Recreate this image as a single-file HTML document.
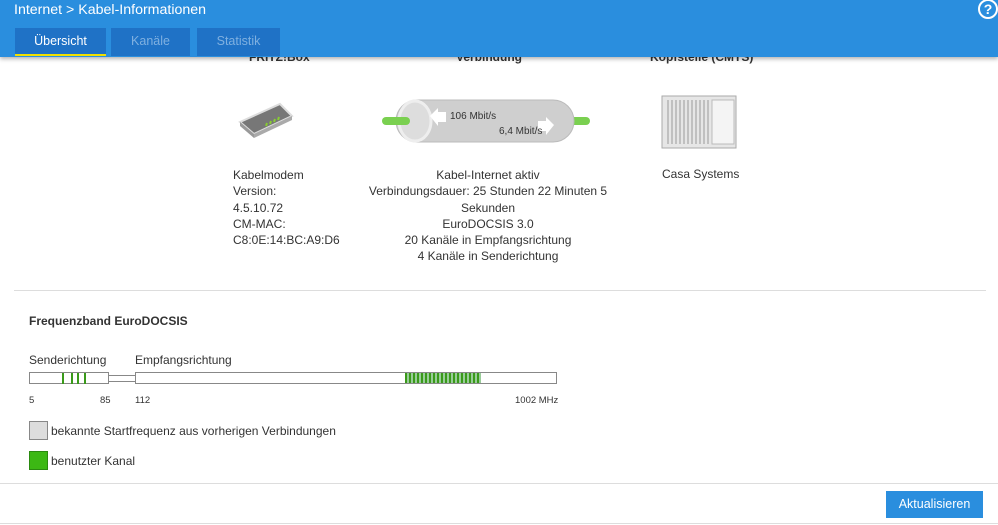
<!DOCTYPE html>
<html><head><meta charset="utf-8"><style>
body{margin:0;width:998px;height:525px;overflow:hidden;background:#fff;font-family:"Liberation Sans",sans-serif;color:#333;position:relative}
.a{position:absolute}
.hdr{left:0;top:0;width:998px;height:57px;background:#2a8ede;box-shadow:0 2px 4px rgba(0,0,0,.3);z-index:2}
.tab{top:28px;height:28px;background:#1f72c6;color:#7fb0e0;font-size:12.5px;text-align:center;line-height:27px}
.c{text-align:center;font-size:12px;line-height:16.3px}
.tk{position:absolute;top:1px;width:2px;height:11px;background:#3a9a1a}
</style></head><body>
<div class="a hdr">
 <div class="a" style="left:14px;top:2px;color:#fff;font-size:14.2px">Internet &gt; Kabel-Informationen</div>
 <div class="a" style="left:978px;top:-1px;width:16px;height:16px;border:2px solid #fff;border-radius:50%;color:#fff;font-weight:bold;font-size:14px;text-align:center;line-height:16px">?</div>
 <div class="a tab" style="left:15px;width:91px;color:#fff;border-bottom:2px solid #f0e000;height:26px">Übersicht</div>
 <div class="a tab" style="left:111px;width:79px">Kanäle</div>
 <div class="a tab" style="left:197px;width:83px">Statistik</div>
</div>
<div class="a" style="left:249px;top:50px;font-size:12px;font-weight:bold">FRITZ!Box</div>
<div class="a" style="left:456px;top:50px;font-size:12px;font-weight:bold">Verbindung</div>
<div class="a" style="left:650px;top:50px;font-size:12px;font-weight:bold">Kopfstelle (CMTS)</div>
<svg class="a" style="left:236px;top:100px" width="60" height="40"><polygon points="4,22 44,4 56,16 18,34" fill="#777" stroke="#ddd" stroke-width="2"/><polygon points="4,22 18,34 18,38 4,26" fill="#999"/><polygon points="18,34 56,16 56,20 18,38" fill="#aaa"/><g stroke="#8c3" stroke-width="2"><line x1="30" y1="26" x2="31" y2="23"/><line x1="34" y1="24" x2="35" y2="21"/><line x1="38" y1="22" x2="39" y2="19"/><line x1="42" y1="20" x2="43" y2="17"/></g></svg>
<svg class="a" style="left:380px;top:98px" width="212" height="46"><rect x="178" y="19" width="32" height="8" rx="4" fill="#7ad050"/><rect x="16" y="2" width="178" height="42" rx="21" fill="#cfcfcf" stroke="#bbb"/><ellipse cx="35" cy="23" rx="16" ry="20" fill="#ddd" stroke="#eee" stroke-width="3"/><rect x="2" y="19" width="28" height="8" rx="4" fill="#7ad050"/><polygon points="50,18 58,10 58,14 66,14 66,24 58,24 58,28" fill="#fff"/><polygon points="174,27 166,19 166,23 158,23 158,33 166,33 166,37" fill="#fff"/><text x="70" y="21" font-size="10" fill="#333" font-family="Liberation Sans">106 Mbit/s</text><text x="119" y="36" font-size="10" fill="#333" font-family="Liberation Sans">6,4 Mbit/s</text></svg>
<svg class="a" style="left:660px;top:94px" width="78" height="56"><rect x="2" y="2" width="74" height="52" fill="#e6e6e6" stroke="#aaa"/><g stroke="#999">
<line x1="8" y1="6" x2="8" y2="50"/><line x1="12" y1="6" x2="12" y2="50"/><line x1="16" y1="6" x2="16" y2="50"/><line x1="20" y1="6" x2="20" y2="50"/><line x1="24" y1="6" x2="24" y2="50"/><line x1="28" y1="6" x2="28" y2="50"/><line x1="32" y1="6" x2="32" y2="50"/><line x1="36" y1="6" x2="36" y2="50"/><line x1="40" y1="6" x2="40" y2="50"/><line x1="44" y1="6" x2="44" y2="50"/><line x1="48" y1="6" x2="48" y2="50"/></g><rect x="52" y="6" width="22" height="44" fill="#f4f4f4" stroke="#bbb"/></svg>
<div class="a" style="left:233px;top:167px;font-size:12px;line-height:16.3px">Kabelmodem<br>Version:<br>4.5.10.72<br>CM-MAC:<br>C8:0E:14:BC:A9:D6</div>
<div class="a c" style="left:360px;top:167px;width:256px">Kabel-Internet aktiv<br>Verbindungsdauer: 25 Stunden 22 Minuten 5<br>Sekunden<br>EuroDOCSIS 3.0<br>20 Kanäle in Empfangsrichtung<br>4 Kanäle in Senderichtung</div>
<div class="a" style="left:662px;top:167px;font-size:12px">Casa Systems</div>
<div class="a" style="left:14px;top:290px;width:972px;border-top:1px solid #ddd"></div>
<div class="a" style="left:29px;top:314px;font-size:12px;font-weight:bold">Frequenzband EuroDOCSIS</div>
<div class="a" style="left:29px;top:353px;font-size:12px">Senderichtung</div>
<div class="a" style="left:135px;top:353px;font-size:12px">Empfangsrichtung</div>
<div class="a" style="left:29px;top:372px;width:80px;height:12px;border:1px solid #888;box-sizing:border-box">
<div class="tk" style="left:32px;top:0"></div><div class="tk" style="left:41px;top:0"></div><div class="tk" style="left:47px;top:0"></div><div class="tk" style="left:54px;top:0"></div></div>
<div class="a" style="left:109px;top:375px;width:26px;height:5px;border-top:1px solid #888;border-bottom:1px solid #888"></div>
<div class="a" style="left:135px;top:372px;width:422px;height:12px;border:1px solid #888;box-sizing:border-box">
<div class="a" style="left:269px;top:0;width:76px;height:10px;background:repeating-linear-gradient(90deg,#3a9a1a 0 2px,#9c9 2px 4px)"></div></div>
<div class="a" style="left:29px;top:395px;font-size:9.5px">5</div>
<div class="a" style="left:100px;top:395px;font-size:9.5px">85</div>
<div class="a" style="left:135px;top:395px;font-size:9.5px">112</div>
<div class="a" style="left:515px;top:395px;font-size:9.5px">1002 MHz</div>
<div class="a" style="left:29px;top:421px;width:19px;height:19px;background:#ddd;border:1px solid #888;box-sizing:border-box"></div>
<div class="a" style="left:51px;top:424px;font-size:12px">bekannte Startfrequenz aus vorherigen Verbindungen</div>
<div class="a" style="left:29px;top:451px;width:19px;height:19px;background:#3cb814;border:1px solid #2a8a10;box-sizing:border-box"></div>
<div class="a" style="left:51px;top:454px;font-size:12px">benutzter Kanal</div>
<div class="a" style="left:0;top:483px;width:998px;border-top:1px solid #ddd"></div>
<div class="a" style="left:886px;top:491px;width:97px;height:27px;background:#2a8ede;color:#fff;font-size:12.5px;text-align:center;line-height:27px">Aktualisieren</div>
<div class="a" style="left:0;top:523px;width:998px;border-top:1px solid #ddd"></div>
</body></html>
